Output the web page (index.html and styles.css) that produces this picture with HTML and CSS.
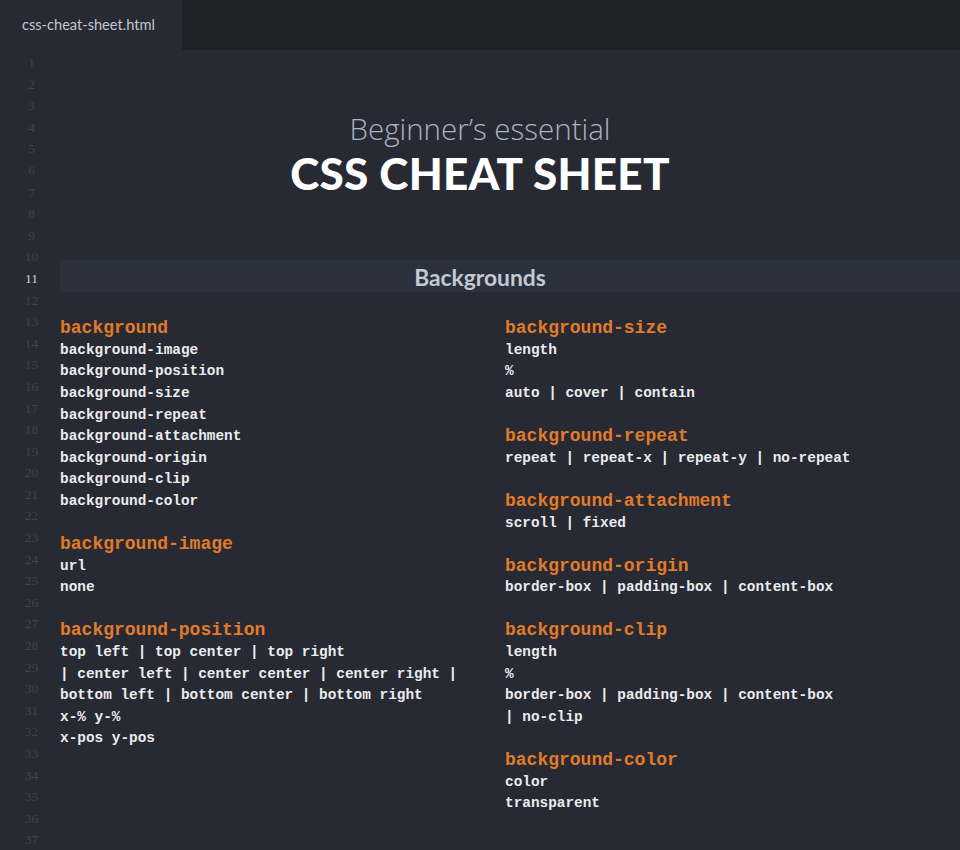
FILE: index.html
```html
<!DOCTYPE html>
<html lang="en">
<head>
<meta charset="utf-8">
<title>css-cheat-sheet.html</title>
<link rel="stylesheet" href="styles.css">
</head>
<body>
<div class="window">
  <div class="tabbar">
    <div class="tab">css-cheat-sheet.html</div>
  </div>
  <div class="editor">
    <div class="gutter">
      <span>1</span><span>2</span><span>3</span><span>4</span><span>5</span><span>6</span><span>7</span><span>8</span><span>9</span><span>10</span>
      <span class="current">11</span><span>12</span><span>13</span><span>14</span><span>15</span><span>16</span><span>17</span><span>18</span><span>19</span><span>20</span>
      <span>21</span><span>22</span><span>23</span><span>24</span><span>25</span><span>26</span><span>27</span><span>28</span><span>29</span><span>30</span>
      <span>31</span><span>32</span><span>33</span><span>34</span><span>35</span><span>36</span><span>37</span>
    </div>
    <div class="content">
      <header class="hero">
        <div class="hero-sub">Beginner’s essential</div>
        <h1 class="hero-title">CSS CHEAT SHEET</h1>
      </header>
      <div class="section-row">
        <h2 class="section-band">Backgrounds</h2>
      </div>
      <div class="blank"></div>
      <div class="columns">
        <div class="col">
          <div class="group">
            <div class="prop">background</div>
            <div class="val">background-image</div>
            <div class="val">background-position</div>
            <div class="val">background-size</div>
            <div class="val">background-repeat</div>
            <div class="val">background-attachment</div>
            <div class="val">background-origin</div>
            <div class="val">background-clip</div>
            <div class="val">background-color</div>
          </div>
          <div class="group">
            <div class="prop">background-image</div>
            <div class="val">url</div>
            <div class="val">none</div>
          </div>
          <div class="group">
            <div class="prop">background-position</div>
            <div class="val">top left | top center | top right</div>
            <div class="val">| center left | center center | center right |</div>
            <div class="val">bottom left | bottom center | bottom right</div>
            <div class="val">x-% y-%</div>
            <div class="val">x-pos y-pos</div>
          </div>
        </div>
        <div class="col">
          <div class="group">
            <div class="prop">background-size</div>
            <div class="val">length</div>
            <div class="val">%</div>
            <div class="val">auto | cover | contain</div>
          </div>
          <div class="group">
            <div class="prop">background-repeat</div>
            <div class="val">repeat | repeat-x | repeat-y | no-repeat</div>
          </div>
          <div class="group">
            <div class="prop">background-attachment</div>
            <div class="val">scroll | fixed</div>
          </div>
          <div class="group">
            <div class="prop">background-origin</div>
            <div class="val">border-box | padding-box | content-box</div>
          </div>
          <div class="group">
            <div class="prop">background-clip</div>
            <div class="val">length</div>
            <div class="val">%</div>
            <div class="val">border-box | padding-box | content-box</div>
            <div class="val">| no-clip</div>
          </div>
          <div class="group">
            <div class="prop">background-color</div>
            <div class="val">color</div>
            <div class="val">transparent</div>
          </div>
        </div>
      </div>
    </div>
  </div>
</div>
</body>
</html>
```
FILE: styles.css
```css
* { box-sizing: border-box; }
html, body {
  margin: 0;
  padding: 0;
  background: #272a33;
  height: 100%;
  overflow: hidden;
}
.window {
  width: 960px;
  height: 850px;
  display: flex;
  flex-direction: column;
  background: #272a33;
  font-family: "Liberation Sans", Arial, sans-serif;
}
.tabbar {
  height: 50px;
  flex: 0 0 50px;
  background: #1f2128;
  display: flex;
}
.tab {
  width: 182px;
  background: #272a33;
  color: #c3c7cf;
  font-family: "Lato", "Open Sans", sans-serif;
  font-size: 14.6px;
  padding-left: 22px;
  display: flex;
  align-items: center;
  padding-bottom: 2px;
}
.editor {
  flex: 1;
  display: flex;
  overflow: hidden;
}
.gutter {
  width: 60px;
  flex: 0 0 60px;
  padding-top: 2px;
  padding-left: 3px;
  display: flex;
  flex-direction: column;
  text-align: center;
  font-family: "Liberation Serif", serif;
  font-size: 13.5px;
  color: #3e434e;
}
.gutter span {
  display: block;
  height: 21.6px;
  line-height: 21.6px;
}
.gutter .current {
  color: #c9ccd3;
}
.content {
  flex: 1;
  padding-top: 9px;
  display: flex;
  flex-direction: column;
}
.hero {
  height: 194.4px;
  display: flex;
  flex-direction: column;
  align-items: center;
  padding-top: 55px;
  padding-right: 60px;
}
.hero-sub {
  font-family: "Open Sans", "Lato", sans-serif;
  font-weight: 300;
  font-size: 29.5px;
  line-height: 30px;
  color: #a9b3c2;
}
.hero-title {
  margin: 6px 0 0;
  font-family: "Lato", "Open Sans", sans-serif;
  font-weight: 900;
  font-size: 44px;
  line-height: 46px;
  color: #ffffff;
  letter-spacing: 0.3px;
}
.section-row {
  height: 43.2px;
  display: flex;
  align-items: flex-end;
  padding-bottom: 5px;
}
.section-band {
  margin: 0;
  width: 100%;
  height: 32px;
  background: #2b313c;
  display: flex;
  align-items: center;
  justify-content: center;
  padding-right: 60px;
  padding-top: 3px;
  font-family: "Lato", "Open Sans", sans-serif;
  font-weight: 700;
  font-size: 22.8px;
  color: #c3c9d3;
}
.blank {
  height: 21.6px;
}
.columns {
  display: grid;
  grid-template-columns: 445px 1fr;
}
.group {
  margin-bottom: 21.6px;
}
.prop, .val {
  height: 21.6px;
  line-height: 21.6px;
  font-family: "Liberation Mono", "Courier New", monospace;
  font-weight: 700;
  white-space: pre;
}
.prop {
  font-size: 18px;
  color: #e17b2a;
}
.val {
  font-size: 14.4px;
  color: #ebecef;
}
```
